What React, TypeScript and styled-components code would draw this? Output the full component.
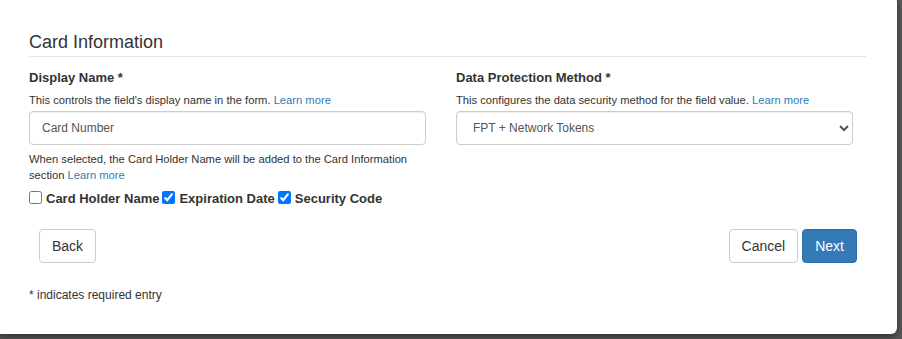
import React from 'react';
import styled, { createGlobalStyle } from 'styled-components';

const GlobalStyle = createGlobalStyle`
  html, body {
    margin: 0;
    padding: 0;
    background: #5a5a5a;
    overflow: hidden;
  }
  body {
    font-family: "Liberation Sans", Arial, Helvetica, sans-serif;
    color: #333;
    height: 339px;
  }
`;

const Modal = styled.div`
  box-sizing: border-box;
  width: 901px;
  height: 338px;
  margin: -4px 0 0 -4px;
  padding: 36px 31px 0 33px;
  background: #fff;
  border-radius: 6px;
  box-shadow: 0 3px 9px rgba(0, 0, 0, 0.5);
`;

const Legend = styled.div`
  font-size: 18px;
  line-height: 20px;
  padding-bottom: 4px;
  border-bottom: 1px solid #e5e5e5;
  margin-bottom: 12px;
`;

const Columns = styled.div`
  display: grid;
  grid-template-columns: 397px 397px;
  column-gap: 30px;
  align-items: start;
`;

const Field = styled.div`
  display: flex;
  flex-direction: column;
`;

const Label = styled.div`
  font-size: 13px;
  font-weight: 700;
  line-height: 18px;
  margin-bottom: 5px;
`;

const Help = styled.div<{ $gap?: number }>`
  font-size: 11.2px;
  line-height: 16px;
  margin-top: ${(p) => p.$gap || 0}px;
  margin-bottom: 3px;
  a {
    color: #337ab7;
    text-decoration: none;
  }
`;

const TextInput = styled.input`
  box-sizing: border-box;
  width: 100%;
  height: 34px;
  padding: 6px 12px;
  font-family: inherit;
  font-size: 12px;
  color: #555;
  border: 1px solid #ccc;
  border-radius: 4px;
  box-shadow: inset 0 1px 1px rgba(0, 0, 0, 0.075);
  outline: none;
`;

const Select = styled.select`
  box-sizing: border-box;
  width: 100%;
  height: 34px;
  padding: 6px 12px;
  font-family: inherit;
  font-size: 12px;
  color: #555;
  background: #fff;
  border: 1px solid #ccc;
  border-radius: 4px;
  box-shadow: inset 0 1px 1px rgba(0, 0, 0, 0.075);
  outline: none;
`;

const Checks = styled.div`
  display: flex;
  align-items: center;
  margin-top: 4px;
  height: 18px;
`;

const Check = styled.label`
  display: inline-flex;
  align-items: center;
  font-size: 13px;
  font-weight: 700;
  line-height: 18px;
  margin-right: 3px;
  white-space: nowrap;

  input {
    width: 13px;
    height: 13px;
    margin: 0 4px 3px 0;
  }
`;

const Actions = styled.div`
  display: flex;
  justify-content: space-between;
  padding: 0 9px 0 10px;
  margin-top: 21px;
`;

const Group = styled.div`
  display: flex;
  gap: 4px;
`;

const Button = styled.button<{ $primary?: boolean }>`
  height: 34px;
  padding: 6px 12px;
  font-family: inherit;
  font-size: 14px;
  line-height: 20px;
  border-radius: 4px;
  border: 1px solid ${(p) => (p.$primary ? '#2e6da4' : '#ccc')};
  background: ${(p) => (p.$primary ? '#337ab7' : '#fff')};
  color: ${(p) => (p.$primary ? '#fff' : '#333')};
  cursor: pointer;
`;

const Footnote = styled.div`
  font-size: 12px;
  line-height: 17px;
  margin-top: 24px;
`;

export default function App(): JSX.Element {
  return (
    <>
      <GlobalStyle />
      <Modal>
        <Legend>Card Information</Legend>
        <Columns>
          <Field>
            <Label>Display Name *</Label>
            <Help>
              This controls the field's display name in the form. <a href="#">Learn more</a>
            </Help>
            <TextInput defaultValue="Card Number" />
            <Help $gap={6}>
              When selected, the Card Holder Name will be added to the Card Information section{' '}
              <a href="#">Learn more</a>
            </Help>
            <Checks>
              <Check>
                <input type="checkbox" />
                Card Holder Name
              </Check>
              <Check>
                <input type="checkbox" defaultChecked />
                Expiration Date
              </Check>
              <Check>
                <input type="checkbox" defaultChecked />
                Security Code
              </Check>
            </Checks>
          </Field>
          <Field>
            <Label>Data Protection Method *</Label>
            <Help>
              This configures the data security method for the field value. <a href="#">Learn more</a>
            </Help>
            <Select defaultValue="fpt-nt">
              <option value="fpt-nt">FPT + Network Tokens</option>
              <option value="fpt">FPT</option>
            </Select>
          </Field>
        </Columns>
        <Actions>
          <Button>Back</Button>
          <Group>
            <Button>Cancel</Button>
            <Button $primary>Next</Button>
          </Group>
        </Actions>
        <Footnote>* indicates required entry</Footnote>
      </Modal>
    </>
  );
}
